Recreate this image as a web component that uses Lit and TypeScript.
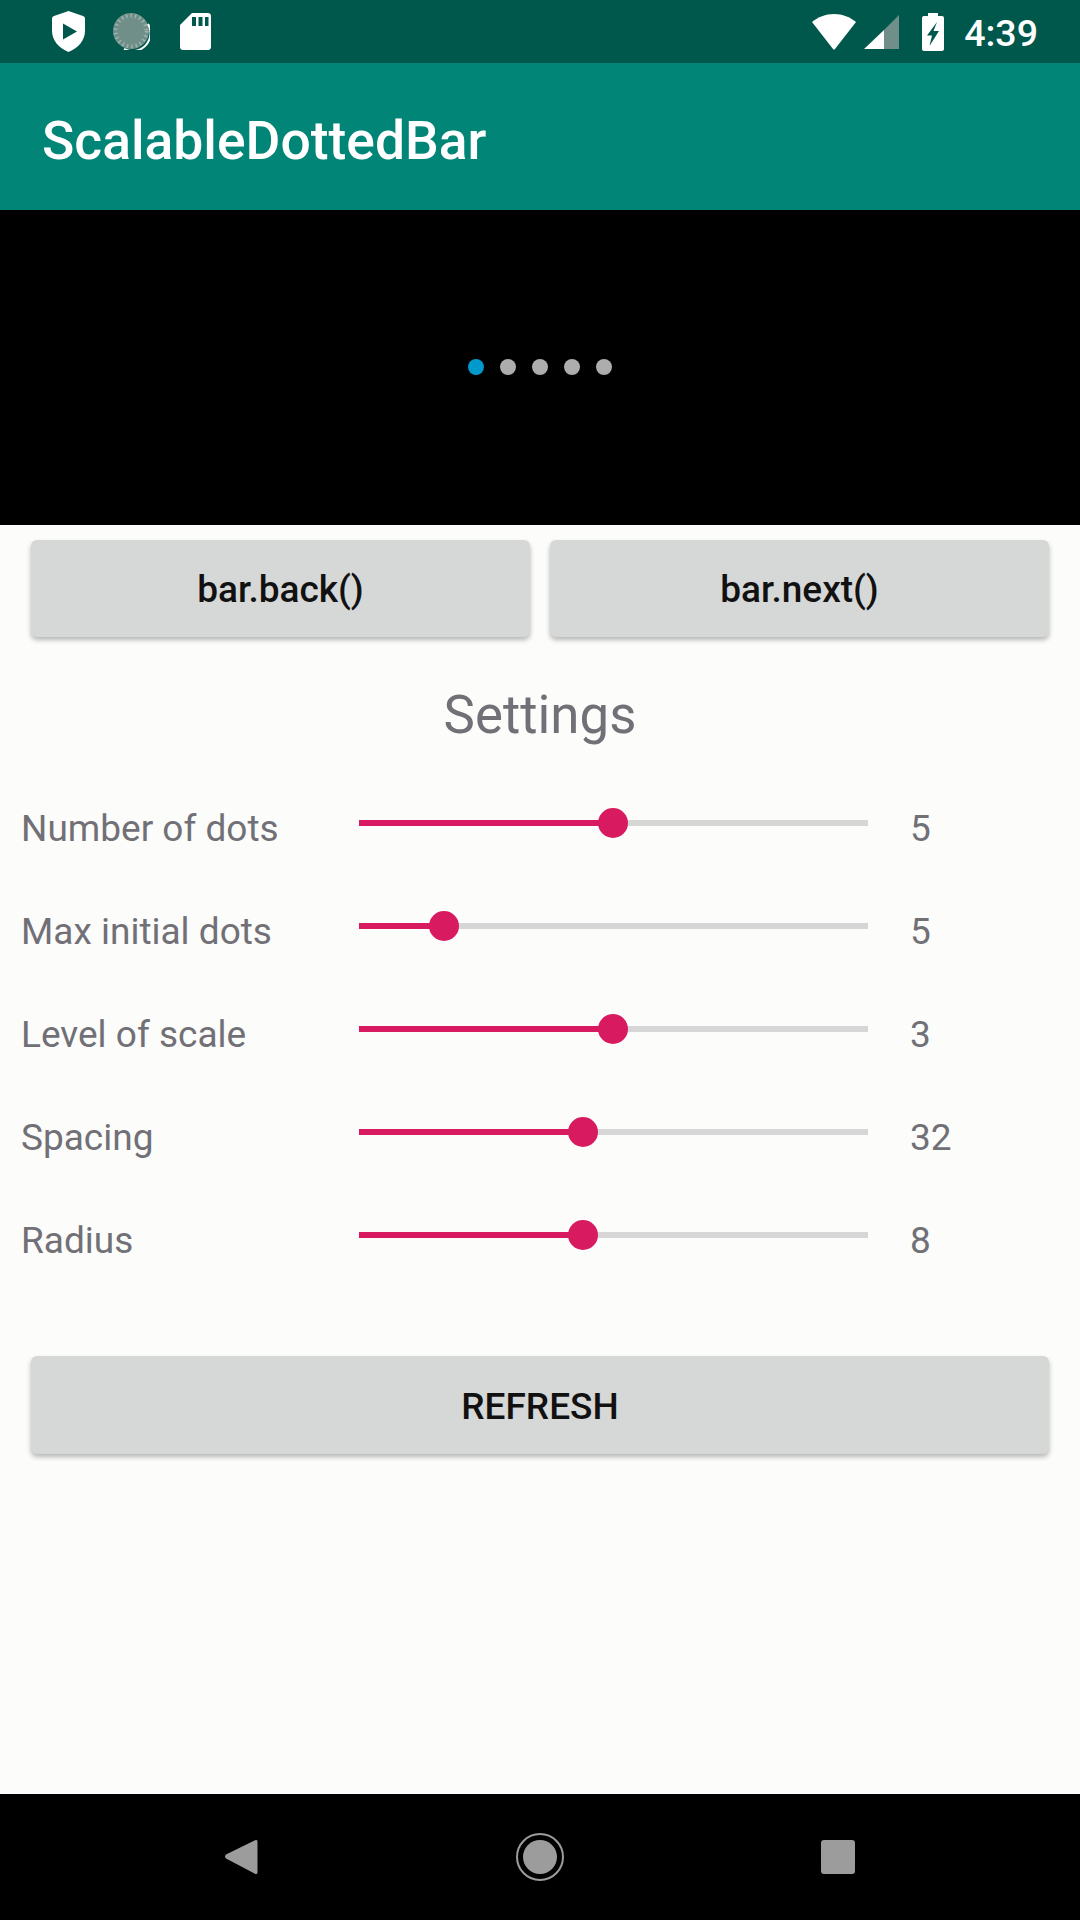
import { LitElement, html, css, svg } from "lit";
import { customElement } from "lit/decorators.js";

const rows = [
  { label: "Number of dots", value: "5", pos: 50 },
  { label: "Max initial dots", value: "5", pos: 16.8 },
  { label: "Level of scale", value: "3", pos: 50 },
  { label: "Spacing", value: "32", pos: 44.2 },
  { label: "Radius", value: "8", pos: 44.2 },
];

@customElement("app-root")
export class AppRoot extends LitElement {
  static styles = css`
    * {
      box-sizing: border-box;
      margin: 0;
      padding: 0;
    }
    :host {
      display: flex;
      flex-direction: column;
      width: 1080px;
      height: 1920px;
      background: #fcfcfb;
      font-family: Roboto, "Liberation Sans", sans-serif;
      overflow: hidden;
    }
    .status {
      height: 63px;
      background: #00574b;
      display: flex;
      align-items: center;
      color: #fff;
      padding: 0 42px 0 52px;
    }
    .status svg {
      display: block;
      flex: none;
    }
    .status .spacer {
      flex: 1;
    }
    .time {
      font-size: 37.5px;
      font-weight: 500;
      margin-left: 20px;
      padding-top: 2px;
    }
    .appbar {
      height: 147px;
      background: #008577;
      color: #fff;
      font-size: 53.4px;
      font-weight: 500;
      display: flex;
      align-items: center;
      padding: 8px 0 0 42px;
    }
    .stage {
      height: 315px;
      background: #000;
      display: flex;
      align-items: center;
      justify-content: center;
      gap: 16px;
      padding-bottom: 2px;
    }
    .dot {
      width: 16px;
      height: 16px;
      border-radius: 50%;
      background: #adadad;
    }
    .dot.on {
      background: #0099cc;
    }
    .content {
      flex: 1;
      display: flex;
      flex-direction: column;
    }
    .buttons {
      display: flex;
      gap: 20px;
      padding: 15px 31px 0;
    }
    .btn {
      flex: 1;
      height: 97px;
      background: #d6d7d7;
      border-radius: 6px;
      box-shadow: 0 3px 5px rgba(0, 0, 0, 0.28);
      display: flex;
      align-items: center;
      justify-content: center;
      font-size: 37px;
      font-weight: 500;
      color: #111;
      padding-top: 2px;
    }
    h2 {
      font-size: 52.8px;
      font-weight: 400;
      color: #707076;
      text-align: center;
      line-height: 56px;
      margin-top: 50px;
      margin-bottom: 31px;
    }
    .row {
      height: 103px;
      display: flex;
      align-items: center;
      padding-left: 21px;
      color: #707076;
      font-size: 37px;
    }
    .label {
      width: 338px;
      padding-top: 5px;
    }
    .slider {
      width: 509px;
      height: 6px;
      background: #d6d6d6;
      position: relative;
      margin-top: -5px;
    }
    .fill {
      height: 100%;
      background: #d81b60;
    }
    .thumb {
      position: absolute;
      top: -12px;
      width: 30px;
      height: 30px;
      margin-left: -16px;
      border-radius: 50%;
      background: #d81b60;
    }
    .value {
      margin-left: 42px;
      padding-top: 5px;
    }
    .refresh {
      padding: 0 31px;
      margin-top: 67px;
    }
    .refresh .btn {
      height: 98px;
    }
    .nav {
      height: 126px;
      background: #000;
      display: flex;
      align-items: center;
      padding-left: 225px;
    }
    .nav svg {
      display: block;
      flex: none;
    }
    .gap-28 {
      margin-right: 28px;
    }
    .gap-30 {
      margin-right: 30px;
    }
    .gap-8 {
      margin-right: 8px;
    }
    .gap-23 {
      margin-right: 23px;
    }
    .nav-back {
      margin-right: 258px;
    }
    .nav-home {
      margin-right: 257px;
    }
  `;

  private statusLeft() {
    return html`
      <svg class="gap-28" width="33" height="41" viewBox="0 0 33 41">
        <path fill="#fff" d="M16.5 0 31 5c1.3.5 2 1.300 2 2.700V20c0 9-6.500 17-16.500 21C6.500 37 0 29 0 20V7.700C0 6.300.7 5.500 2 5z" />
        <path fill="#00574b" d="M11 12.500 25 20.500 11 28.500z" />
      </svg>
      <svg class="gap-30" width="37" height="37" viewBox="0 0 37 37">
        <circle cx="18" cy="18" r="18" fill="#6f8f88" />
        <circle cx="18" cy="18" r="15.500" fill="none" stroke="#9db2ad" stroke-width="4" stroke-dasharray="1.500 3" />
        <path d="M35 11a18 18 0 0 1-24 25" fill="none" stroke="#fff" stroke-width="2" />
      </svg>
      <svg width="31" height="37" viewBox="0 0 31 37">
        <path fill="#fff" d="M12 0h16c1.700 0 3 1.300 3 3v31c0 1.700-1.300 3-3 3H3c-1.700 0-3-1.300-3-3V12z" />
        <path fill="#00574b" d="M12 4h4v9h-4zM18.500 4h4v9h-4zM25 4h3.500v9H25z" />
      </svg>
    `;
  }

  private statusRight() {
    return html`
      <svg class="gap-8" width="44" height="36" viewBox="0 0 44 36">
        <path fill="#fff" d="M22 0c8.500 0 16 3 22 8L23 35c-.6.700-1.400.7-2 0L0 8C6 3 13.500 0 22 0z" />
      </svg>
      <svg class="gap-23" width="35" height="34" viewBox="0 0 35 34">
        <path fill="#6f8f88" d="M35 0v34H20V15z" />
        <path fill="#fff" d="M20 15v19H0z" />
      </svg>
      <svg width="22" height="38" viewBox="0 0 22 38">
        <path fill="#fff" d="M6 0h10v3h4c1.100 0 2 .9 2 2v31c0 1.100-.9 2-2 2H2c-1.100 0-2-.9-2-2V5c0-1.100.9-2 2-2h4z" />
        <path fill="#00574b" d="M15 9 5 22.500h5L7.500 33 17 18h-5.500z" />
      </svg>
    `;
  }

  private navIcons() {
    return svg`
      <path fill="#9c9c9c" d="M31 1c1 0 1.500.5 1.500 2v30c0 1.500-.5 2-1.500 2-.5 0-1-.2-1.500-.6L1 19.500c-1.300-1-1.300-3 0-4L29.500 1.600c.5-.4 1-.6 1.500-.6z" />
    `;
  }

  render() {
    return html`
      <div class="status">
        ${this.statusLeft()}
        <div class="spacer"></div>
        ${this.statusRight()}
        <span class="time">4:39</span>
      </div>
      <div class="appbar">ScalableDottedBar</div>
      <div class="stage">
        <div class="dot on"></div>
        <div class="dot"></div>
        <div class="dot"></div>
        <div class="dot"></div>
        <div class="dot"></div>
      </div>
      <div class="content">
        <div class="buttons">
          <div class="btn">bar.back()</div>
          <div class="btn">bar.next()</div>
        </div>
        <h2>Settings</h2>
        ${rows.map(
          (r) => html`
            <div class="row">
              <span class="label">${r.label}</span>
              <div class="slider">
                <div class="fill" style="width:${r.pos}%"></div>
                <div class="thumb" style="left:${r.pos}%"></div>
              </div>
              <span class="value">${r.value}</span>
            </div>
          `
        )}
        <div class="refresh"><div class="btn">REFRESH</div></div>
      </div>
      <div class="nav">
        <svg class="nav-back" width="33" height="36" viewBox="0 0 33 36">${this.navIcons()}</svg>
        <svg class="nav-home" width="48" height="48" viewBox="0 0 48 48">
          <circle cx="24" cy="24" r="23" fill="none" stroke="#9c9c9c" stroke-width="2" />
          <circle cx="24" cy="24" r="17" fill="#9c9c9c" />
        </svg>
        <svg width="34" height="34" viewBox="0 0 34 34">
          <rect width="34" height="34" rx="3" fill="#9c9c9c" />
        </svg>
      </div>
    `;
  }
}
